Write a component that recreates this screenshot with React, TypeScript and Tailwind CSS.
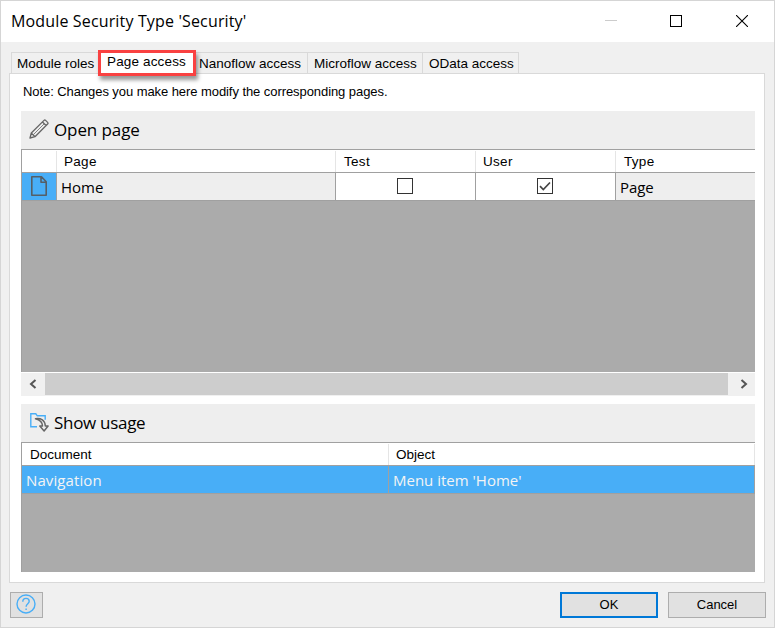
import React from "react";

const arial = "font-['Liberation_Sans',Arial,sans-serif] leading-4 whitespace-nowrap";
const ui = `${arial} text-[13px]`;
const segoe = "font-['Open_Sans','Noto_Sans',sans-serif] whitespace-nowrap";

function TitleBar() {
  return (
    <header className="flex h-[41px] shrink-0 items-start justify-between bg-white pl-[10px] pr-[26px]">
      <h1 className={`${segoe} mt-[8px] text-[16px] leading-6 tracking-[0.15px]`}>Module Security Type 'Security'</h1>
      <div className="mt-[14px] flex">
        <svg className="mr-[53px]" width="12" height="12" shapeRendering="crispEdges"><path d="M0 5.5h12" stroke="#ccc" /></svg>
        <svg className="mr-[54px]" width="12" height="12" shapeRendering="crispEdges"><path d="M.5.5h11v11H.5z" fill="none" stroke="#000" /></svg>
        <svg width="12" height="12"><path d="M0 0l12 12M12 0L0 12" stroke="#000" strokeWidth="1.1" /></svg>
      </div>
    </header>
  );
}

function Tabs() {
  return (
    <nav className={`${arial} flex h-[21px] pl-[10px] text-[13.5px]`}>
      <div className="w-[87px] border-l border-t border-[#d9d9d9] pl-[5px] pt-[3px]">Module roles</div>
      <div className="relative z-10 -mt-[2px] h-[26px] w-[98px] border-[3px] border-[#f94141] bg-white pl-[6px] pt-px tracking-[0.15px] shadow-[2px_4px_4px_rgba(0,0,0,0.4)]">Page access</div>
      <div className="w-[111px] border-t border-[#d9d9d9] pl-[3px] pt-[3px]">Nanoflow access</div>
      <div className="w-[115px] border-l border-t border-[#d9d9d9] pl-[6px] pt-[3px]">Microflow access</div>
      <div className="w-[97px] border-x border-t border-[#d9d9d9] pl-[6px] pt-[3px]">OData access</div>
    </nav>
  );
}

function PencilIcon() {
  return (
    <svg className="-mt-[2px]" width="20" height="20" viewBox="0 0 20 20" fill="none" stroke="#666" strokeWidth="1.3" strokeLinejoin="round">
      <path d="M1 19l1.300-5L15 1.400c.5-.5 1.100-.5 1.600 0l2 2c.5.5.5 1.100 0 1.600L6 17.700zM2.300 14L6 17.700M13.500 3l3.500 3.500" />
      <path d="M4.500 15.500L15 5" strokeWidth=".8" />
    </svg>
  );
}

function PageIcon() {
  return (
    <svg width="16" height="20" viewBox="0 0 16 20" fill="none" stroke="#555f67" strokeWidth="1.6" strokeLinejoin="round">
      <path d="M.8.8h9.700l4.700 5v13.400H.8zM10 1v5.300h5.200" />
    </svg>
  );
}

function UsageIcon() {
  return (
    <svg className="-mt-[2px]" width="20" height="19" viewBox="0 0 20 19" fill="none">
      <path d="M7 13.700H.8V.8h5l1.500 2h7.900v4" stroke="#48aef7" strokeWidth="1.400" />
      <path d="M5.500 5.700c5.500-.7 9.500 1.500 9.800 7.300h2.800l-4 5-4.300-5h2.700c0-3.500-2-6-7-7.300z" fill="#eee" stroke="#666" strokeWidth="1.500" strokeLinejoin="round" />
    </svg>
  );
}

function Checkbox({ checked = false }: { checked?: boolean }) {
  return (
    <svg width="16" height="16" fill="none">
      <path d="M.5.5h15v15H.5z" stroke="#333" fill="#fff" shapeRendering="crispEdges" />
      {checked && <path d="M3 8.200l3.300 3.300 6.700-7" stroke="#444" strokeWidth="1.700" />}
    </svg>
  );
}

function AccessGrid() {
  return (
    <section>
      <div className="flex h-[38px] items-center bg-[#eee] pl-2">
        <PencilIcon />
        <span className={`${segoe} ml-[5px] text-[17px] leading-6 tracking-[-0.1px]`}>Open page</span>
      </div>
      <div className="h-[223px] border-l border-t border-[#a0a0a0] bg-[#ababab]">
        <div className={`${arial} flex h-[23px] border-b border-[#a0a0a0] bg-white pt-px text-[13.5px] tracking-[0.3px]`}>
          <div className="w-[34px]" />
          <div className="w-[279px] border-l border-[#e5e5e5] pl-[7px] pt-[3px]">Page</div>
          <div className="w-[140px] border-l border-[#e5e5e5] pl-2 pt-[3px]">Test</div>
          <div className="w-[140px] border-l border-[#e5e5e5] pl-[7px] pt-[3px]">User</div>
          <div className="flex-1 border-l border-[#e5e5e5] pl-2 pt-[3px]">Type</div>
        </div>
        <div className={`${segoe} flex h-[28px] border-b border-[#a0a0a0] text-[15px] leading-[28px]`}>
          <div className="flex w-[34px] justify-center bg-[#48aef7] pt-[3px]"><PageIcon /></div>
          <div className="w-[279px] border-l border-[#a0a0a0] bg-[#eee] pl-1">Home</div>
          <div className="w-[140px] border-l border-[#a0a0a0] bg-white pl-[61px] pt-[5px]"><Checkbox /></div>
          <div className="w-[140px] border-l border-[#a0a0a0] bg-white pl-[61px] pt-[5px]"><Checkbox checked /></div>
          <div className="flex-1 border-l border-[#a0a0a0] bg-[#eee] pl-1 tracking-[-0.1px]">Page</div>
        </div>
      </div>
      <div className="mt-px flex h-[23px] bg-[#f0f0f0]">
        <div className="flex w-6 justify-center pt-[6px]">
          <svg width="8" height="10" fill="none"><path d="M6.500 1L2 5l4.500 4" stroke="#555" strokeWidth="2" /></svg>
        </div>
        <div className="h-[22px] w-[683px] bg-[#cdcdcd]" />
        <div className="flex flex-1 justify-center pl-[4px] pt-[6px]">
          <svg width="8" height="10" fill="none"><path d="M1.500 1L6 5 1.500 9" stroke="#555" strokeWidth="2" /></svg>
        </div>
      </div>
    </section>
  );
}

function UsageGrid() {
  return (
    <section className="mt-2">
      <div className="flex h-[38px] items-center bg-[#eee] pl-[9px]">
        <UsageIcon />
        <span className={`${segoe} ml-1 text-[17px] leading-6 tracking-[-0.3px]`}>Show usage</span>
      </div>
      <div className="h-[130px] border-l border-t border-[#a0a0a0] bg-[#ababab]">
        <div className={`${arial} flex h-[23px] border-b border-[#a0a0a0] bg-white pt-px text-[13.5px]`}>
          <div className="w-[366px] pl-2 pt-[3px]">Document</div>
          <div className="flex-1 border-x border-[#e5e5e5] pl-[7px] pt-[3px]">Object</div>
        </div>
        <div className={`${segoe} flex h-[28px] border-b border-r border-[#a0a0a0] bg-[#48aef7] text-[15px] leading-[28px] text-[#f4f4f4]`}>
          <div className="w-[366px] pl-1 tracking-[0.1px]">Navigation</div>
          <div className="flex-1 border-l border-[#a0a0a0] pl-1">Menu item 'Home'</div>
        </div>
      </div>
    </section>
  );
}

export default function App() {
  return (
    <div className="flex h-[628px] w-[775px] flex-col border border-[#d5d5d5] bg-[#f0f0f0] text-black">
      <TitleBar />
      <div className="pt-[10px]"><Tabs /></div>
      <main className="ml-2 h-[510px] w-[756px] border border-[#d9d9d9] bg-white pl-[11px] pr-[9px] pt-[10px]">
        <p className={`${ui} mb-[11px] pl-[2px] tracking-[-0.07px]`}>Note: Changes you make here modify the corresponding pages.</p>
        <AccessGrid />
        <UsageGrid />
      </main>
      <footer className={`${ui} mt-[9px] flex pl-[9px]`}>
        <button className="flex h-[26px] w-[33px] border border-[#adadad] bg-[#e1e1e1] pl-[5px] pt-px">
          <svg width="20" height="20" fill="none" stroke="#48aef7" strokeWidth="1.400">
            <circle cx="10" cy="10" r="9" />
            <path d="M6.800 7.700c0-2 1.300-3.300 3.200-3.300s3.200 1.200 3.200 2.900c0 2.300-3.100 2.500-3.100 5.400M10.100 14.500v1.600" />
          </svg>
        </button>
        <button className="ml-[517px] h-[26px] w-[98px] border-2 border-[#0078d7] bg-[#e1e1e1]">OK</button>
        <button className="ml-[10px] h-[26px] w-[98px] border border-[#adadad] bg-[#e1e1e1]">Cancel</button>
      </footer>
    </div>
  );
}
